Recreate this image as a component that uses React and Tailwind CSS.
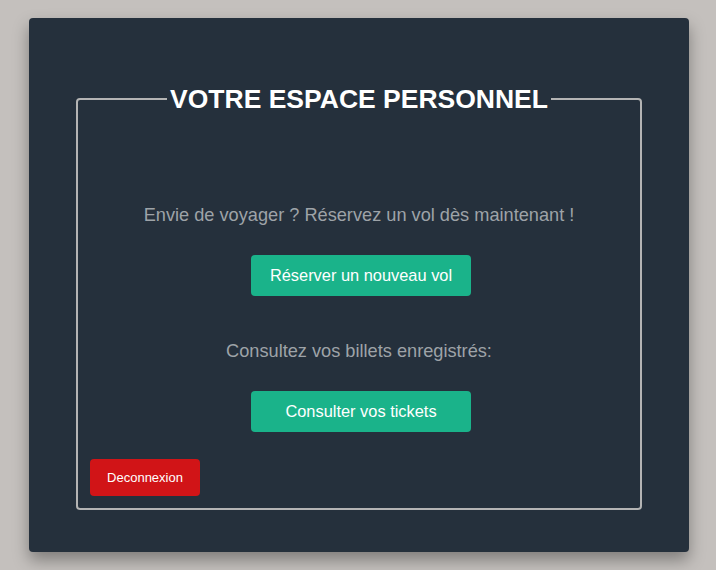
export default function App() {
    return (
        <div className="min-h-[570px] bg-[#c4c0bd] pt-[18px] pl-[29px]" style={{ fontFamily: '"Liberation Sans", Arial, sans-serif' }}>
            <div className="w-[660px] h-[534px] rounded bg-[#25303c] px-[47px] pt-[66px] shadow-[0_8px_16px_rgba(0,0,0,0.35)]">
                <fieldset className="h-[426px] rounded border-2 border-[#b4b4b4] px-[12px] pb-[12px] flex flex-col">
                    <legend className="mx-auto px-[3px] text-[26.5px] leading-[30px] font-bold text-white">
                        VOTRE ESPACE PERSONNEL
                    </legend>

                    <div className="flex flex-col items-center mt-[90px]">
                        <p className="text-[18.2px] leading-[22px] text-[#9ea3a8]">
                            Envie de voyager ? Réservez un vol dès maintenant !
                        </p>
                        <button className="mt-[29px] ml-[4px] w-[220px] h-[41px] rounded bg-[#1ab38a] text-[16.4px] text-white">
                            Réserver un nouveau vol
                        </button>

                        <p className="mt-[44px] text-[18.2px] leading-[22px] text-[#9ea3a8]">
                            Consultez vos billets enregistrés:
                        </p>
                        <button className="mt-[29px] ml-[4px] w-[220px] h-[41px] rounded bg-[#1ab38a] text-[16.4px] text-white">
                            Consulter vos tickets
                        </button>
                    </div>

                    <div className="mt-auto">
                        <button className="w-[110px] h-[37px] rounded bg-[#d11417] text-[13px] text-white">
                            Deconnexion
                        </button>
                    </div>
                </fieldset>
            </div>
        </div>
    );
}
